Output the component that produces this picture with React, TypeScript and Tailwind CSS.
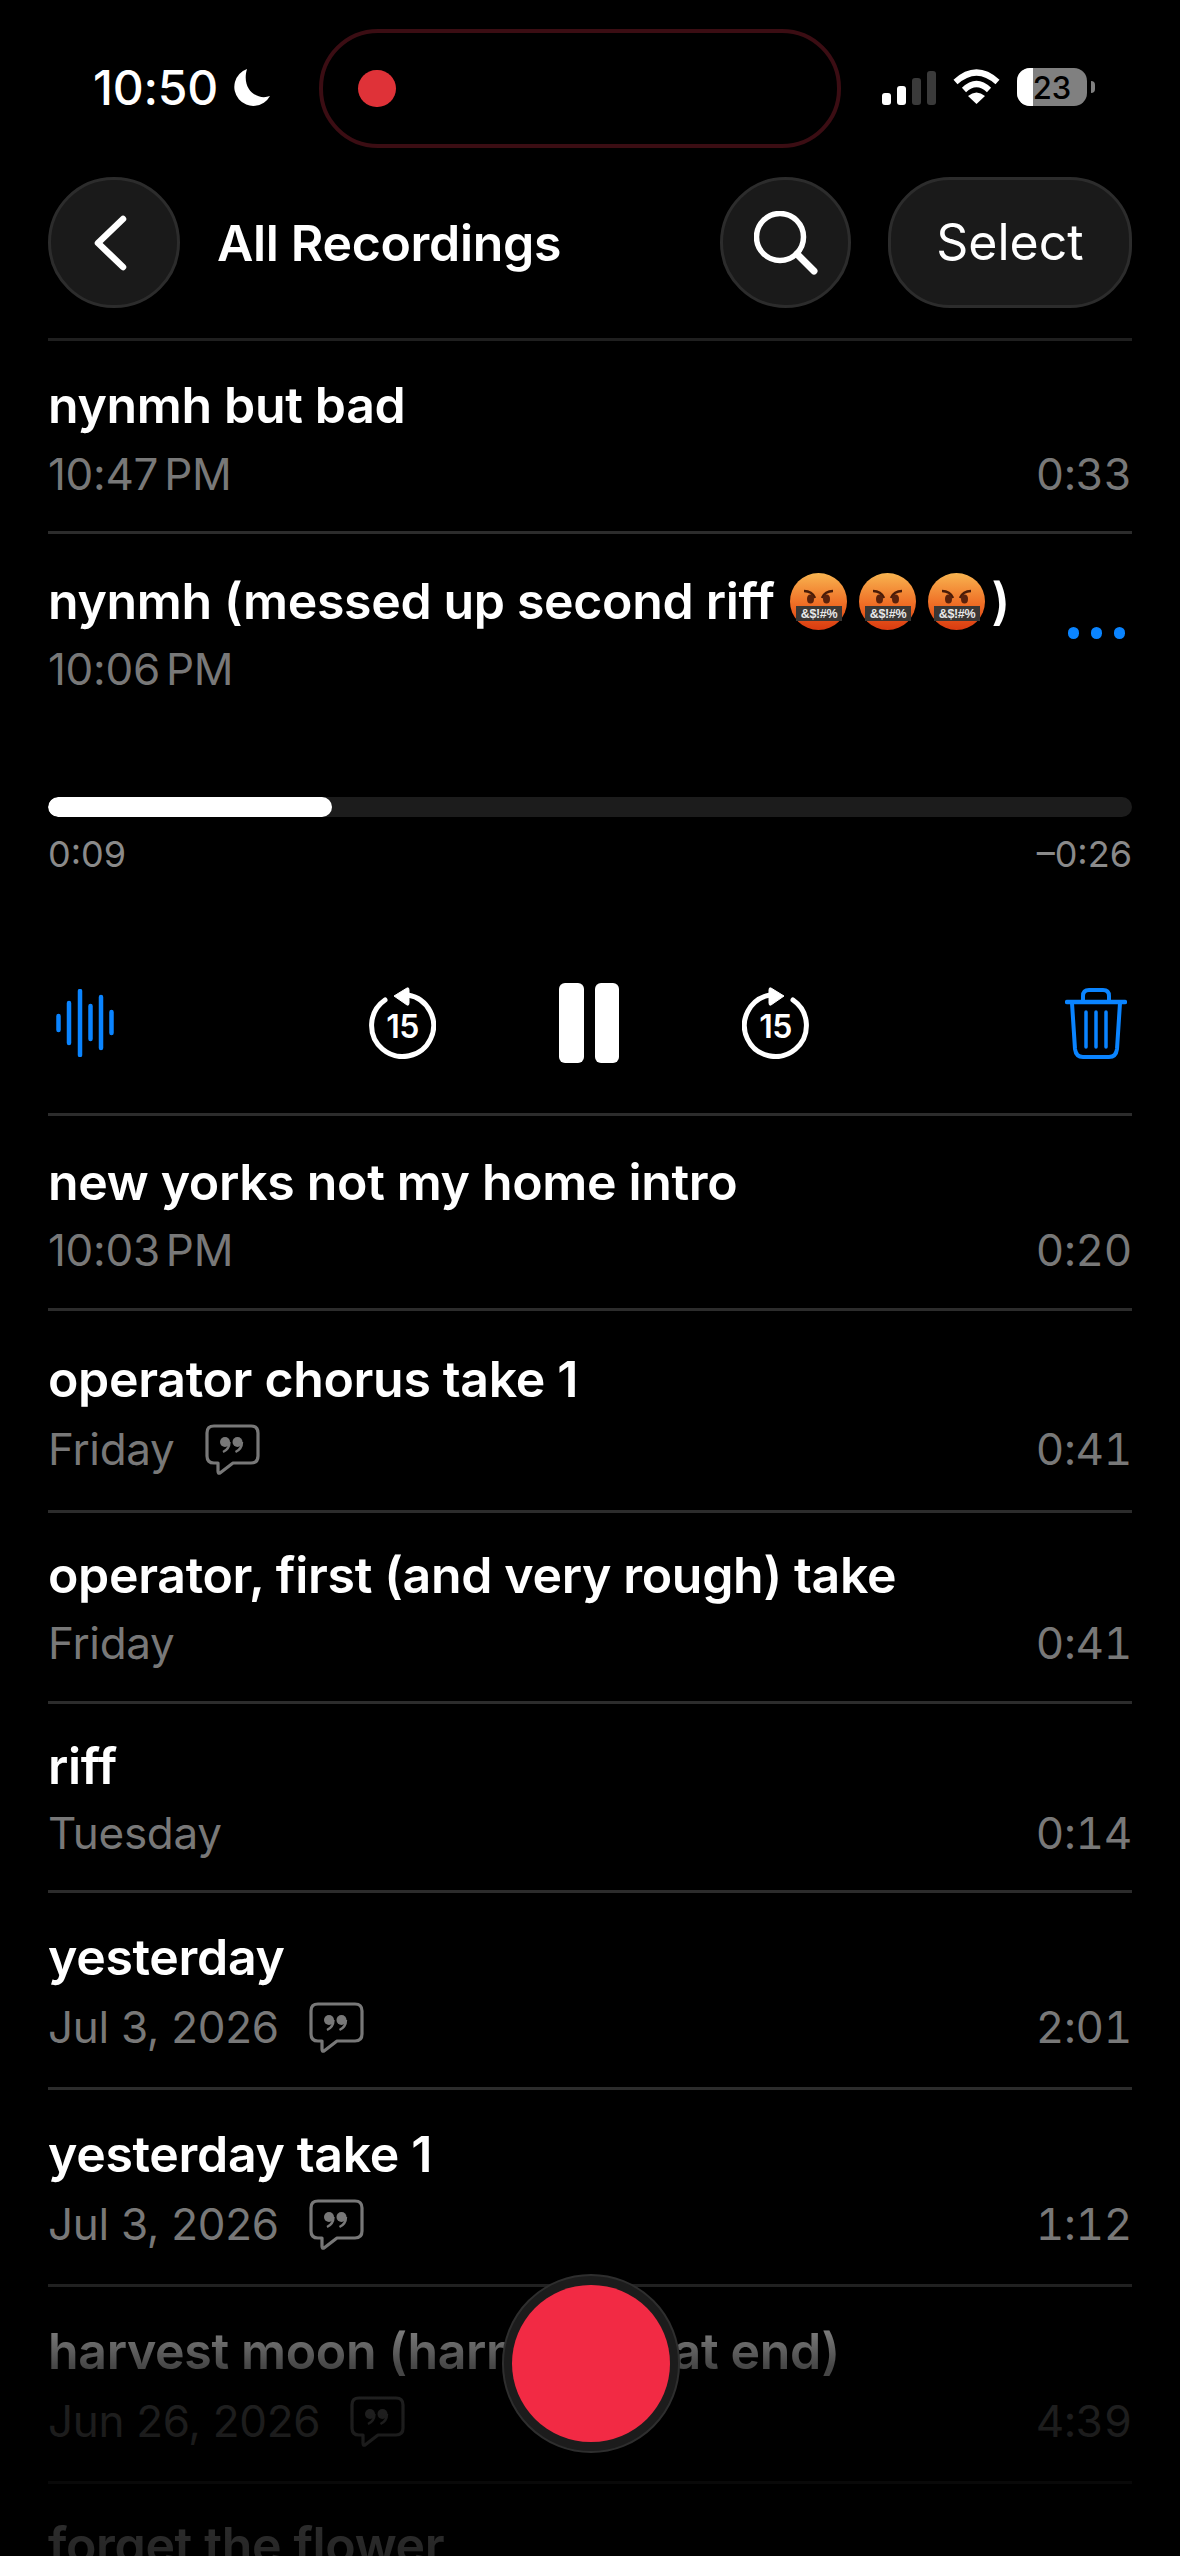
import React from "react";

const F = "font-['Inter','Noto_Sans',sans-serif]";
const TITLE = "text-[50px] leading-[60px] font-semibold tracking-[-0.33px]";
const SUB = "text-[44px] leading-[56px] tracking-[-0.3px]";

function Emoji() {
  return (
    <svg width="57" height="57" viewBox="0 0 57 57" className="shrink-0">
      <defs>
        <linearGradient id="eg" x1="0" y1="0" x2="0" y2="1">
          <stop offset="0" stopColor="#f8b450" />
          <stop offset="0.55" stopColor="#ef6d25" />
          <stop offset="1" stopColor="#d93a10" />
        </linearGradient>
      </defs>
      <circle cx="28.5" cy="28.5" r="28.5" fill="url(#eg)" />
      <path d="M14 18 Q22 18 25 25" stroke="#4a1c08" strokeWidth="2.5" fill="none" />
      <path d="M43 18 Q35 18 32 25" stroke="#4a1c08" strokeWidth="2.5" fill="none" />
      <ellipse cx="20.5" cy="26" rx="3.5" ry="4.5" fill="#5a220c" />
      <ellipse cx="36.5" cy="26" rx="3.5" ry="4.5" fill="#5a220c" />
      <rect x="6" y="33" width="46" height="15" fill="#3b3734" />
      <text x="29" y="45" textAnchor="middle" fontSize="12.5" fontWeight="700" fill="#e8e8e8" fontFamily="Liberation Sans">&amp;$!#%</text>
    </svg>
  );
}

function Note() {
  return (
    <svg width="55" height="51" viewBox="0 0 55 51" className="shrink-0" fill="none">
      <path d="M9 2 H46 Q53 2 53 9 V32 Q53 39 46 39 H28 L15 49 Q13 50 13 47 V39 H9 Q2 39 2 32 V9 Q2 2 9 2 Z" stroke="currentColor" strokeWidth="3.2" strokeLinejoin="round" />
      <circle cx="20" cy="18" r="5" fill="currentColor" />
      <circle cx="32.5" cy="18" r="5" fill="currentColor" />
      <path d="M24.5 18 Q24.5 25 18 28" stroke="currentColor" strokeWidth="2.4" />
      <path d="M37 18 Q37 25 30.5 28" stroke="currentColor" strokeWidth="2.4" />
    </svg>
  );
}

function Row({ title, sub, dur, note, tight, h, titleTop, subTop }: any) {
  return (
    <div className={`${h} border-t-[3px] border-[#2c2c2c] flex flex-col`}>
      <div className={`${titleTop} ${TITLE} text-white`}>{title}</div>
      <div className={`${subTop} flex items-center justify-between ${SUB} text-[#787878]`}>
        <div className="flex items-center gap-[30px]">
          <span className={tight ? "[word-spacing:-6px]" : ""}>{sub}</span>
          {note && <Note />}
        </div>
        <span className="tabular-nums">{dur}</span>
      </div>
    </div>
  );
}

function Skip({ flip }: { flip?: boolean }) {
  return (
    <div className="relative w-[67px] h-[72px] shrink-0">
      <svg width="67" height="72" viewBox="0 0 67 72" fill="none" className={flip ? "-scale-x-100" : ""}>
        <path d="M39 8 A31 31 0 1 1 16 13" stroke="white" strokeWidth="5" strokeLinecap="round" />
        <path d="M25 9 L38 1 Q40 0 40 3 V16 Q40 19 38 18 Z" fill="white" stroke="white" strokeWidth="1" strokeLinejoin="round" />
      </svg>
      <span className="absolute left-0 right-0 top-[22px] text-center text-white text-[32px] leading-[36px] font-semibold tracking-[-0.5px]">15</span>
    </div>
  );
}

export default function App() {
  return (
    <div className={`${F} relative w-[1180px] h-[2556px] bg-black overflow-hidden`}>
      {/* status */}
      <div className="h-[177px] pl-[93px] pr-[85px] flex items-start">
        <div className="mt-[64px] flex items-center gap-[14px] w-[226px]">
          <span className="text-white text-[48px] leading-[48px] font-medium tracking-[-0.2px]">10:50</span>
          <svg width="38" height="38" viewBox="0 0 38 38"><path d="M15 0 A19 19 0 1 0 38 27 C25 32 9 20 15 0 Z" fill="white" /></svg>
        </div>
        <div className="mt-[29px] w-[522px] h-[119px] rounded-[59px] border-[4px] border-[#3b0d13] flex items-center pl-[35px]">
          <div className="w-[38px] h-[37px] rounded-full bg-[#df3238]" />
        </div>
        <div className="mt-[68px] ml-auto flex items-center">
          <svg width="54" height="34" viewBox="0 0 54 34" className="mt-[2px]">
            <rect x="0" y="22" width="9" height="12" rx="3" fill="white" />
            <rect x="15" y="15" width="9" height="19" rx="3" fill="white" />
            <rect x="30" y="7" width="9" height="27" rx="3" fill="#3a3a3a" />
            <rect x="45" y="0" width="9" height="34" rx="3" fill="#3a3a3a" />
          </svg>
          <svg width="47" height="36" viewBox="0 0 47 36" fill="none" className="ml-[17px]">
            <path d="M2.5 13 Q23.5 -6 44.5 13" stroke="white" strokeWidth="6" />
            <path d="M11 21 Q23.5 9 36 21" stroke="white" strokeWidth="6" />
            <path d="M23.5 35 L15 27 Q23.5 20 32 27 Z" fill="white" />
          </svg>
          <div className="relative ml-[17px] w-[70px] h-[38px] rounded-[13px] bg-[#808080] overflow-hidden flex items-center justify-center">
            <div className="absolute left-0 top-0 bottom-0 w-[16px] bg-white" />
            <span className="relative text-black text-[31px] leading-[31px] font-medium">23</span>
          </div>
          <div className="ml-[4px] w-[4px] h-[12px] bg-[#808080] rounded-r-full" />
        </div>
      </div>
      {/* nav */}
      <div className="px-[48px] h-[161px] flex items-start">
        <div className="w-[132px] h-[131px] rounded-full bg-[#1a1a1a] border-[3px] border-[#2c2c2c] flex items-center justify-center">
          <svg width="36" height="56" viewBox="0 0 36 56" fill="none" className="-ml-[8px]"><path d="M31 4 L6 28 L31 52" stroke="white" strokeWidth="6.5" strokeLinecap="round" strokeLinejoin="round" /></svg>
        </div>
        <div className={`ml-[37px] h-[131px] flex items-center text-white ${TITLE}`}>All Recordings</div>
        <div className="ml-auto w-[131px] h-[131px] rounded-full bg-[#1a1a1a] border-[3px] border-[#2c2c2c] flex items-center justify-center">
          <svg width="64" height="64" viewBox="0 0 64 64" fill="none"><circle cx="26" cy="26" r="23.5" stroke="white" strokeWidth="5.5" /><path d="M43 43 L60 60" stroke="white" strokeWidth="7" strokeLinecap="round" /></svg>
        </div>
        <div className="ml-[37px] w-[244px] h-[131px] rounded-[62px] bg-[#1a1a1a] border-[3px] border-[#2c2c2c] flex items-center justify-center text-white text-[50px] font-normal">Select</div>
      </div>
      {/* list */}
      <div className="mx-[48px] w-[1084px]">
        <Row title="nynmh but bad" sub="10:47 PM" tight dur="0:33" h="h-[193px] !border-[#1f1f1f]" titleTop="mt-[34px]" subTop="mt-[11px]" />
        <div className="h-[582px] border-t-[3px] border-[#2c2c2c] relative">
          <div className={`mt-[37px] flex items-center text-white ${TITLE}`}>
            <span>nynmh (messed up second riff</span>
            <span className="ml-[15px] flex gap-[12px]"><Emoji /><Emoji /><Emoji /></span>
            <span className="ml-[7px]">)</span>
          </div>
          <div className={`mt-[10px] ${SUB} text-[#787878] [word-spacing:-6px]`}>10:06 PM</div>
          <div className="absolute right-[7px] top-[93px] flex gap-[12px]">
            <div className="w-[11px] h-[12px] rounded-full bg-[#0a84ff]" />
            <div className="w-[11px] h-[12px] rounded-full bg-[#0a84ff]" />
            <div className="w-[11px] h-[12px] rounded-full bg-[#0a84ff]" />
          </div>
          <div className="mt-[100px] h-[20px] rounded-full bg-[#1c1c1c] overflow-hidden">
            <div className="h-full w-[284px] rounded-full bg-white" />
          </div>
          <div className="mt-[15px] flex justify-between text-[36px] leading-[44px] text-[#8a8a8a]">
            <span>0:09</span>
            <span>–0:26</span>
          </div>
          <div className="mt-[107px] h-[80px] flex items-center">
            <svg width="58" height="68" viewBox="0 0 58 68" className="ml-[8px] shrink-0" stroke="#0a84ff" strokeWidth="4.5" strokeLinecap="round">
              <path d="M2.5 27V41 M13 14V54 M24 2V66 M34.5 17V50 M45 8V59 M55.5 23V44" />
            </svg>
            <div className="ml-[255px]"><Skip /></div>
            <div className="ml-[123px] flex gap-[11px] shrink-0">
              <div className="w-[25px] h-[80px] rounded-[6px] bg-white" />
              <div className="w-[24px] h-[80px] rounded-[6px] bg-white" />
            </div>
            <div className="ml-[123px]"><Skip flip /></div>
            <svg width="62" height="71" viewBox="0 0 62 71" fill="none" stroke="#0a84ff" className="ml-auto mr-[5px] shrink-0">
              <path d="M2 14H60" strokeWidth="4.5" strokeLinecap="round" />
              <path d="M18 13V8Q18 2 24 2H38Q44 2 44 8V13" strokeWidth="4" />
              <path d="M7 15L10 61Q11 69 18 69H44Q51 69 52 61L55 15" strokeWidth="4" />
              <path d="M21 24V59 M31 24V59 M41 24V59" strokeWidth="3.5" strokeLinecap="round" />
            </svg>
          </div>
        </div>
        <Row title="new yorks not my home intro" sub="10:03 PM" tight dur="0:20" h="h-[195px]" titleTop="mt-[36px]" subTop="mt-[10px]" />
        <Row title="operator chorus take 1" sub="Friday" dur="0:41" note h="h-[202px]" titleTop="mt-[38px]" subTop="mt-[12px]" />
        <Row title="operator, first (and very rough) take" sub="Friday" dur="0:41" h="h-[191px]" titleTop="mt-[32px]" subTop="mt-[10px]" />
        <Row title="riff" sub="Tuesday" dur="0:14" h="h-[189px]" titleTop="mt-[32px]" subTop="mt-[9px]" />
        <Row title="yesterday" sub="Jul 3, 2026" dur="2:01" note h="h-[197px]" titleTop="mt-[34px]" subTop="mt-[12px]" />
        <Row title="yesterday take 1" sub="Jul 3, 2026" dur="1:12" note h="h-[197px]" titleTop="mt-[34px]" subTop="mt-[12px]" />
        <Row title="harvest moon (harmonies at end)" sub="Jun 26, 2026" dur="4:39" note h="h-[197px]" titleTop="mt-[34px]" subTop="mt-[12px]" />
        <Row title="forget the flower" sub="" dur="" h="h-[90px]" titleTop="mt-[31px]" subTop="mt-[0px]" />
      </div>
      {/* fade */}
      <div className="absolute left-0 right-0 bottom-0 h-[316px] bg-gradient-to-b from-transparent via-[rgba(0,0,0,0.72)] via-[40%] to-[rgba(0,0,0,0.85)]" />
      {/* record */}
      <div className="absolute left-[502px] top-[2274px] w-[178px] h-[179px] rounded-full bg-[#1c1c1c] border-[2px] border-[#2e2e2e] flex items-center justify-center">
        <div className="w-[158px] h-[157px] rounded-full bg-[#f22a44]" />
      </div>
    </div>
  );
}
